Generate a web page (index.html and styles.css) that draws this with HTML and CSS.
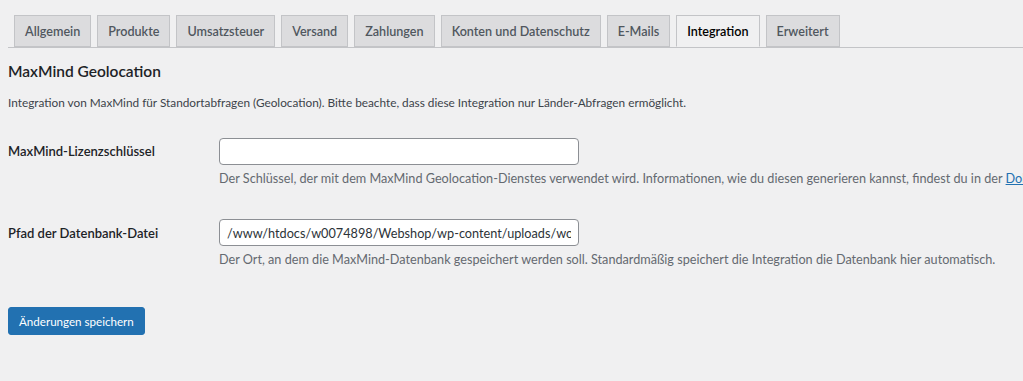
FILE: index.html
```html
<!DOCTYPE html>
<html lang="de">
<head>
    <meta charset="UTF-8">
    <meta name="viewport" content="width=device-width, initial-scale=1.0">
    <title>Einstellungen - Integration</title>
    <link rel="stylesheet" href="styles.css">
</head>
<body>
    <div class="wrap">
        <nav class="nav-tabs">
            <a class="nav-tab" href="#">Allgemein</a>
            <a class="nav-tab" href="#">Produkte</a>
            <a class="nav-tab" href="#">Umsatzsteuer</a>
            <a class="nav-tab" href="#">Versand</a>
            <a class="nav-tab" href="#">Zahlungen</a>
            <a class="nav-tab" href="#">Konten und Datenschutz</a>
            <a class="nav-tab" href="#">E-Mails</a>
            <a class="nav-tab nav-tab-active" href="#">Integration</a>
            <a class="nav-tab" href="#">Erweitert</a>
        </nav>

        <h2 class="section-title">MaxMind Geolocation</h2>
        <p class="section-desc">Integration von MaxMind für Standortabfragen (Geolocation). Bitte beachte, dass diese Integration nur Länder-Abfragen ermöglicht.</p>

        <div class="form-rows">
            <div class="form-row">
                <label class="row-label" for="license-key">MaxMind-Lizenzschlüssel</label>
                <div class="row-field">
                    <input type="text" id="license-key" class="text-input">
                    <p class="field-desc">Der Schlüssel, der mit dem MaxMind Geolocation-Dienstes verwendet wird. Informationen, wie du diesen generieren kannst, findest du in der <a href="#">Dokumentation</a>.</p>
                </div>
            </div>
            <div class="form-row">
                <label class="row-label row-label-low" for="db-path">Pfad der Datenbank-Datei</label>
                <div class="row-field">
                    <input type="text" id="db-path" class="text-input" value="/www/htdocs/w0074898/Webshop/wp-content/uploads/woocommerce_uploads/GeoLite2-Country.mmdb">
                    <p class="field-desc">Der Ort, an dem die MaxMind-Datenbank gespeichert werden soll. Standardmäßig speichert die Integration die Datenbank hier automatisch.</p>
                </div>
            </div>
        </div>

        <button type="button" class="btn-primary">Änderungen speichern</button>
    </div>
</body>
</html>
```

FILE: styles.css
```css
html, body {
    overflow: hidden;
}
body {
    font-family: Lato, "Liberation Sans", sans-serif;
    background-color: #f0f0f1;
    margin: 0;
    color: #3c434a;
    font-size: 13px;
}
.wrap {
    padding: 15px 0 0 8px;
}

/* Tabs */
.nav-tabs {
    display: flex;
    border-bottom: 1px solid #c3c4c7;
    height: 32px;
}
.nav-tab {
    display: block;
    margin-left: 6px;
    padding: 5px 10px;
    line-height: 21px;
    font-size: 12.6px;
    font-weight: 600;
    color: #50575e;
    background-color: #dcdcde;
    border: 1px solid #c3c4c7;
    text-decoration: none;
    white-space: nowrap;
}
.nav-tab-active {
    background-color: #f0f0f1;
    color: #000;
    border-bottom-color: #f0f0f1;
}

/* Section */
.section-title {
    margin: 13px 0 0 0;
    font-size: 15.5px;
    line-height: 20px;
    font-weight: 600;
    color: #1d2327;
}
.section-desc {
    margin: 13px 0 0 0;
    font-size: 11.8px;
    line-height: 18px;
    white-space: nowrap;
}

/* Form */
.form-rows {
    margin-top: 26px;
}
.form-row {
    display: grid;
    grid-template-columns: 211px 1fr;
    padding-bottom: 31px;
}
.row-label {
    padding-top: 4px;
    font-size: 13px;
    line-height: 18px;
    font-weight: 600;
    color: #1d2327;
}
.row-label-low {
    padding-top: 5px;
}
.text-input {
    box-sizing: border-box;
    display: block;
    width: 360px;
    height: 27px;
    padding: 0 7px;
    border: 1px solid #8c8f94;
    border-radius: 4px;
    background-color: #fff;
    font-family: inherit;
    font-size: 12.7px;
    color: #2c3338;
}
.field-desc {
    margin: 5px 0 0 0;
    font-size: 12.66px;
    line-height: 18px;
    color: #646970;
    white-space: nowrap;
}
.field-desc a {
    color: #2271b1;
}

.btn-primary {
    margin-top: 7px;
    height: 28px;
    padding: 0 10px;
    background-color: #2271b1;
    border: 1px solid #2271b1;
    border-radius: 3px;
    color: #fff;
    font-family: inherit;
    font-size: 11.6px;
    cursor: pointer;
}
```
